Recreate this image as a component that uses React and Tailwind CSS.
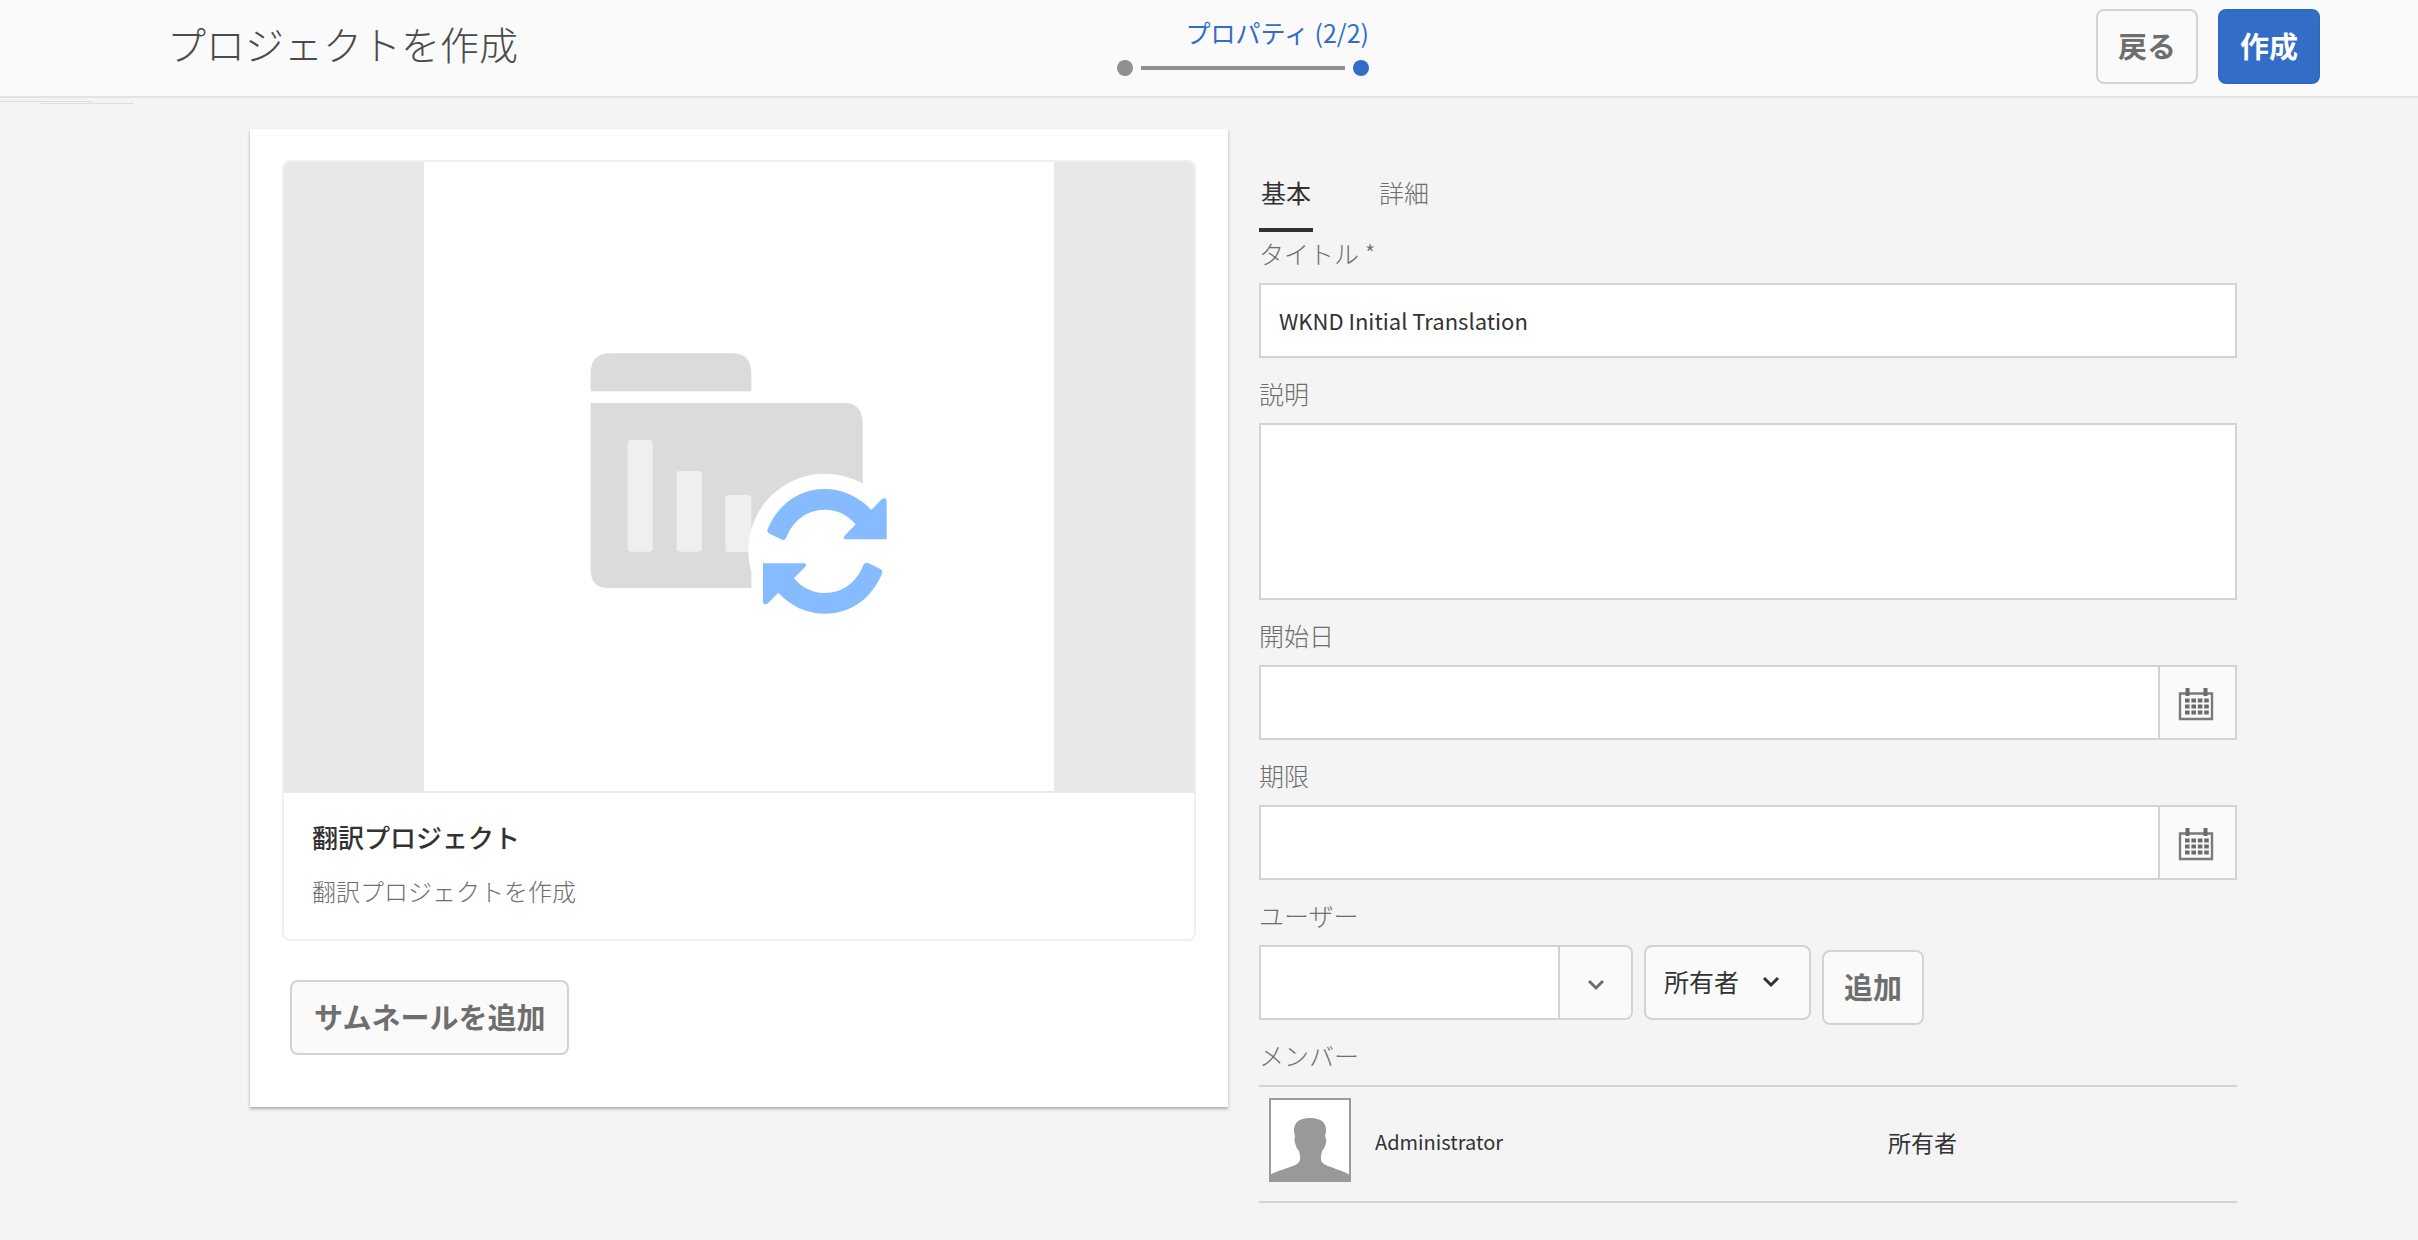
import React from 'react';

const outline = 'border-2 border-[#d3d3d3]';
const field = 'block w-full bg-white border-2 border-[#d3d3d3] px-[18px] pb-[2px] text-[22px] text-[#323232] outline-none';

function Button({ children, primary = false, className = 'px-5' }) {
  const tone = primary
    ? 'border-[#2c68c4] bg-[#326dc8] text-white'
    : 'border-[#d3d3d3] bg-[#fafafa] text-[#6e6e6e]';
  return (
    <button
      type="button"
      className={`h-[75px] shrink-0 whitespace-nowrap rounded-lg border-2 pb-1 text-[29px] font-bold leading-[36px] ${tone} ${className}`}
    >
      {children}
    </button>
  );
}

function Label({ htmlFor, children, first = false }) {
  return (
    <label
      htmlFor={htmlFor}
      className={`block pb-[14px] text-[25px] font-light leading-[32px] text-[#6e6e6e] ${first ? 'pt-[5px]' : 'pt-[19px]'}`}
    >
      {children}
    </label>
  );
}

function Chevron({ className }) {
  return (
    <svg viewBox="0 0 18 12" className={`h-3 w-[18px] ${className}`} fill="none" stroke="currentColor" strokeWidth="3" aria-hidden="true">
      <path d="M2 2l7 7 7-7" />
    </svg>
  );
}

function CalendarIcon() {
  return (
    <svg viewBox="0 0 36 34" className="h-[34px] w-9" fill="none" aria-hidden="true">
      <path d="M2 6.5H34V32H2Z" stroke="#7a7a7a" strokeWidth="2.4" />
      <path d="M9.5 1V9M27.5 1V9" stroke="#6a6a6a" strokeWidth="4" />
      <path d="M7 13.5H31M7 19.5H31M7 25.5H31" stroke="#6a6a6a" strokeWidth="4" strokeDasharray="4.6 1.8" />
    </svg>
  );
}

function DateField({ id, label }) {
  return (
    <div>
      <Label htmlFor={id}>{label}</Label>
      <div className={`flex h-[75px] bg-white ${outline}`}>
        <input id={id} type="text" className="min-w-0 flex-1 px-[18px] text-[22px] outline-none" />
        <button type="button" aria-label={`${label}を選択`} className="flex w-[77px] items-center justify-center border-l-2 border-[#d3d3d3] bg-[#fafafa] pr-1 pt-[2px]">
          <CalendarIcon />
        </button>
      </div>
    </div>
  );
}

function ProjectArt() {
  return (
    <svg viewBox="-438 -501 1890 1887" className="h-[629px] w-[630px] bg-white" aria-hidden="true">
      <path d="M62 187V132Q62 73 121 73H485Q544 73 544 132V187Z" fill="#dbdbdb" />
      <path d="M62 222H820Q878 222 878 282V560L544 777H116Q62 777 62 723Z" fill="#dbdbdb" />
      <g fill="#efefef">
        <rect x="173" y="333" width="75" height="335" rx="10" />
        <rect x="320" y="426" width="76" height="242" rx="10" />
        <rect x="466" y="498" width="78" height="171" rx="10" />
      </g>
      <path d="M544 790V726Q535 700 535 665A230 230 0 0 1 878 464H1000V880H544Z" fill="#fff" />
      <g fill="#86bcff">
        <path d="M593 600C622 530 683 480 764 480C820 480 868 504 904 543L935 511Q950 503 950 516V631H826Q817 629 824 620L857 586C833 558 803 542 766 542C708 542 668 577 649 626Q643 636 633 631L598 614Q589 608 593 600Z" />
        <path d="M593 600C622 530 683 480 764 480C820 480 868 504 904 543L935 511Q950 503 950 516V631H826Q817 629 824 620L857 586C833 558 803 542 766 542C708 542 668 577 649 626Q643 636 633 631L598 614Q589 608 593 600Z" transform="rotate(180 764.5 667)" />
      </g>
    </svg>
  );
}

function Avatar() {
  return (
    <svg viewBox="0 0 82 84" className="h-[84px] w-[82px]" role="img" aria-label="Administrator">
      <rect x="1" y="1" width="80" height="82" fill="#fff" stroke="#9b9b9b" strokeWidth="2" />
      <path
        d="M1 77C7 73 23 69 28 66Q32 63 31 58L30 53Q27 50 26 45Q25 42 26 38L25 34Q24 20 41 20Q58 20 57 34L56 38Q58 42 57 45Q56 50 53 53L52 58Q51 63 55 66C60 69 75 73 81 77V83H1Z"
        fill="#999"
      />
    </svg>
  );
}

export default function App() {
  return (
    <div className="min-h-screen bg-[#f4f4f4] pb-8 font-['Noto_Sans_CJK_JP',sans-serif] text-[#323232]">
      <header className="grid h-[98px] grid-cols-[1fr_auto_1fr] border-b-2 border-[#e3e3e3] bg-[#fafafa]">
        <h1 className="pl-[167px] pt-4 text-[39px] font-light leading-[54px] text-[#4b4b4b]">プロジェクトを作成</h1>
        <div className="flex w-[252px] translate-x-[34px] flex-col pt-[14px]">
          <p className="self-end whitespace-nowrap text-[25px] leading-[36px] text-[#326dc8]">プロパティ (2/2)</p>
          <div className="mt-[10px] flex items-center gap-2">
            <span className="size-4 rounded-full bg-[#909090]" />
            <span className="h-1 flex-1 bg-[#909090]" />
            <span className="size-4 rounded-full bg-[#326dc8]" />
          </div>
        </div>
        <div className="flex justify-end gap-5 pr-[98px] pt-[9px]">
          <Button>戻る</Button>
          <Button primary>作成</Button>
        </div>
      </header>
      <div className="flex h-[31px] flex-col pt-[3px]" aria-hidden="true">
        <span className="h-px w-[93px] bg-[#dedede]" />
        <span className="ml-[41px] mt-px h-px w-[93px] bg-[#dedede]" />
      </div>

      <main className="grid grid-cols-2 items-start gap-[31px] pl-[250px] pr-[181px]">
        <section className="min-w-0 bg-white px-8 pb-[52px] pt-[31px] shadow-[0_2px_3px_rgba(0,0,0,0.3)]">
          <article className="overflow-hidden rounded-lg border-2 border-[#f0f0f0]">
            <div className="flex justify-center border-b-2 border-[#e8e8e8] bg-[#e8e8e8]">
              <ProjectArt />
            </div>
            <div className="px-7 pb-7 pt-6">
              <h2 className="text-[26px] font-medium leading-[40px] text-[#323232]">翻訳プロジェクト</h2>
              <p className="mt-[14px] text-2xl font-light leading-[40px] text-[#6e6e6e]">翻訳プロジェクトを作成</p>
            </div>
          </article>
          <Button className="ml-2 mt-[39px] px-[22px]">サムネールを追加</Button>
        </section>

        <form className="min-w-0 pt-[45px]" onSubmit={(e) => e.preventDefault()}>
          <div role="tablist" className="flex gap-16 text-[25px] leading-[36px]">
            <button type="button" role="tab" aria-selected="true" className="border-b-4 border-[#323232] px-[2px] pb-[18px]">基本</button>
            <button type="button" role="tab" aria-selected="false" className="border-b-4 border-transparent px-[2px] pb-[18px] font-light text-[#6e6e6e]">詳細</button>
          </div>

          <Label htmlFor="title" first>タイトル *</Label>
          <input id="title" type="text" defaultValue="WKND Initial Translation" className={`h-[75px] ${field}`} />

          <Label htmlFor="description">説明</Label>
          <textarea id="description" className={`h-[177px] resize-none ${field}`} />

          <DateField id="start" label="開始日" />
          <DateField id="due" label="期限" />

          <Label htmlFor="user">ユーザー</Label>
          <div className="flex h-[75px] items-start gap-[11px]">
            <div className={`flex h-[75px] w-[374px] overflow-hidden rounded-r-lg bg-white ${outline}`}>
              <input id="user" type="text" className="min-w-0 flex-1 px-[18px] text-[22px] outline-none" />
              <button type="button" aria-label="ユーザーを選択" className="flex w-[73px] items-center justify-center border-l-2 border-[#d3d3d3] bg-[#fafafa] text-[#6e6e6e]">
                <Chevron className="mt-1" />
              </button>
            </div>
            <div className="relative">
              <select aria-label="役割" defaultValue="owner" className={`h-[75px] w-[167px] appearance-none rounded-lg bg-[#fafafa] pb-[2px] pl-[18px] pr-12 text-[25px] outline-none ${outline}`}>
                <option value="owner">所有者</option>
              </select>
              <Chevron className="pointer-events-none absolute right-[31px] top-[31px]" />
            </div>
            <Button className="mt-[5px] px-5">追加</Button>
          </div>

          <h3 className="pb-[14px] pt-[19px] text-[25px] font-light leading-[32px] text-[#6e6e6e]">メンバー</h3>
          <table className="w-full table-fixed border-y-2 border-[#d3d3d3] text-left leading-[32px]">
            <tbody>
              <tr>
                <td className="w-[116px] pb-[19px] pl-[10px] pt-[11px]"><Avatar /></td>
                <td className="w-[513px] pb-1 text-[20px]">Administrator</td>
                <td className="pb-1 text-[23px]">所有者</td>
              </tr>
            </tbody>
          </table>
        </form>
      </main>
    </div>
  );
}
